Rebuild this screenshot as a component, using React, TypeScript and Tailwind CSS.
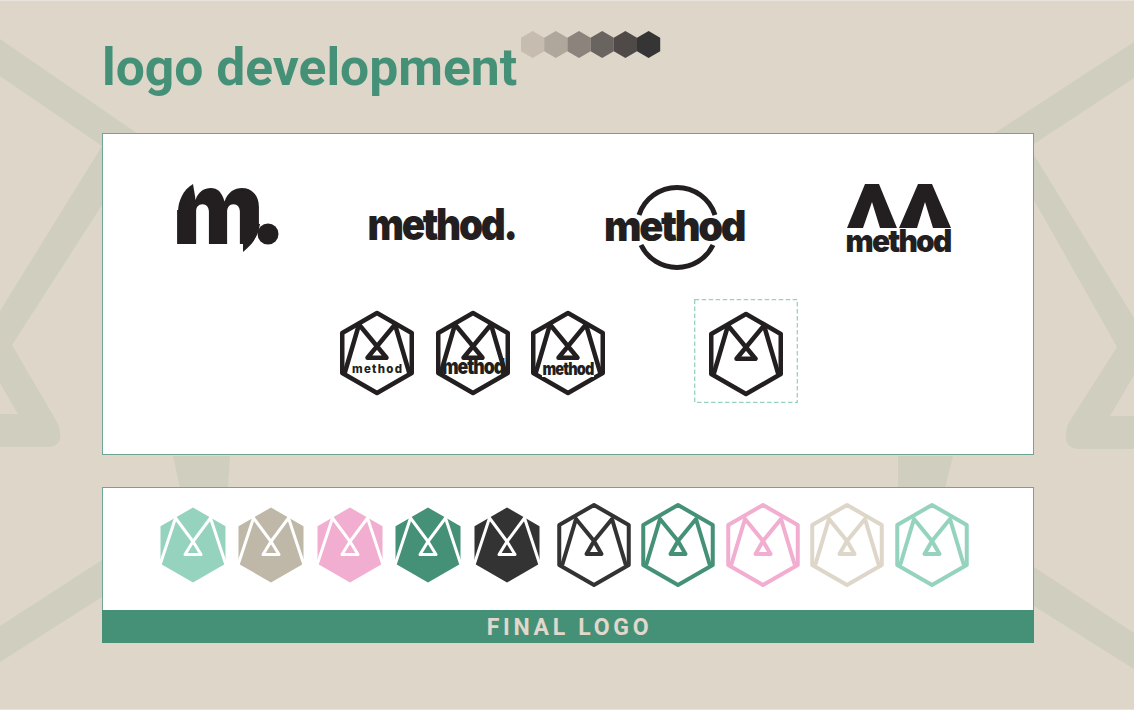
const GREEN = "#459178";
const MINT = "#96d3bf";
const INK = "#231f20";
const WORD_FONT = "Inter, 'Liberation Sans', sans-serif";

const HEX_POINTS = "0,-40 34.75,-20 34.75,20 0,40 -34.75,20 -34.75,-20";
const M_LINES = "M-32,19 L-18,-28.5 L9.5,4.8 L-9.5,4.8 L18,-28.5 L32,19";
const M_FINAL = "M-31.5,19 L-18,-26 L0,-4 L7.5,9 L-7.5,9 L0,-4 L18,-26 L31.5,19";

const Background = () => (
  <svg className="absolute inset-0" width="1134" height="710" viewBox="0 0 1134 710" fill="#d0cebf">
    <polygon points="0,38 138,133 102,145 0,75" />
    <path d="M102,145 L102,204 L12,344 L58,423 Q66,446 47,446 L0,446 L0,413 L18,413 L0,382 L0,310 Z" />
    <polygon points="102,559 102,596 0,661 0,625" />
    <polygon points="173,455 230,455 228,487 180,487" />
    <polygon points="993,133 1134,41 1134,77 1034,143" />
    <path d="M1034,154 L1134,317 L1134,374 L1110,415 L1134,415 L1134,448 L1080,448 Q1060,448 1068,423 L1117,346 L1034,199 Z" />
    <polygon points="1034,566 1134,632 1134,668 1034,605" />
    <polygon points="898,455 953,455 945,487 898,487" />
  </svg>
);

const HexStrip = () => {
  const colors = ["#c6bdb0", "#b0a79c", "#8c837c", "#6a6460", "#4f4a47", "#353535"];
  return (
    <svg width="140" height="27" viewBox="0 0 140 27">
      {colors.map((c, i) => (
        <polygon
          key={c}
          points="0,6.75 11.6,0 23.2,6.75 23.2,20.25 11.6,27 0,20.25"
          fill={c}
          transform={`translate(${i * 23.2} 0)`}
        />
      ))}
    </svg>
  );
};

// wordmark: tight heavy letters squeezed to the measured width
const Word = ({ x, y, width, size, text = "method" }: { x: number; y: number; width: number; size: number; text?: string }) => (
  <text
    x={x}
    y={y}
    textLength={width}
    lengthAdjust="spacingAndGlyphs"
    fontFamily={WORD_FONT}
    fontSize={size}
    fontWeight="900"
    fill={INK}
    letterSpacing={size * -0.06}
  >
    {text}
  </text>
);

const OutlineLogo = ({ word }: { word?: React.ReactNode }) => (
  <svg width="80" height="88" viewBox="-40 -44 80 88" className="shrink-0 overflow-visible">
    <g fill="none" stroke={INK} strokeWidth="4.5" strokeLinejoin="round" strokeLinecap="round">
      <polygon points={HEX_POINTS} />
      <path d={M_LINES} />
    </g>
    {word}
  </svg>
);

const SmallOutline = ({ color }: { color: string }) => (
  <svg width="76" height="86" viewBox="-38 -43 76 86" className="shrink-0">
    <g fill="none" stroke={color} strokeWidth="4" strokeLinejoin="round" strokeLinecap="round">
      <polygon points={HEX_POINTS} />
      <path d={M_FINAL} />
    </g>
  </svg>
);

const FilledLogo = ({ color }: { color: string }) => (
  <svg width="68" height="78" viewBox="-34 -39 68 78" className="shrink-0">
    <polygon points="0,-37.5 32.5,-18.75 32.5,18.75 0,37.5 -32.5,18.75 -32.5,-18.75" fill={color} />
    <path
      d="M-33,20 L-17.5,-27 L0,-3.5 L8,9.5 L-8,9.5 L0,-3.5 L17.5,-27 L33,20"
      fill="none"
      stroke="#fff"
      strokeWidth="3"
      strokeLinejoin="round"
      strokeLinecap="round"
    />
  </svg>
);

const LogoLetter = () => (
  <svg width="104" height="92" viewBox="176 180 104 92" className="shrink-0 overflow-visible">
    <text x="172.3" y="244" fontFamily={WORD_FONT} fontSize="102" fontWeight="900" fill={INK} textLength="91.5" lengthAdjust="spacingAndGlyphs">
      m
    </text>
    <rect x="172" y="184" width="23" height="26" fill="#fff" />
    <path d="M178,212 C178,201 183,190 193,184 L195,196 L195,212 Z" fill={INK} />
    <path d="M262,224 L260,224 C258,236 252,245 243,252 L262,252 Z" fill="#fff" />
    <path d="M243,238 L243,252 C252,245 258,236 260,224 L243,224 Z" fill={INK} />
    <circle cx="268" cy="234" r="10.5" fill={INK} />
  </svg>
);

const LogoWord = () => (
  <svg width="152" height="92" viewBox="366 180 152 92" className="shrink-0 overflow-visible">
    <Word x={367.5} y={240} width={148} size={44} text="method." />
  </svg>
);

const LogoCircle = () => (
  <svg width="142" height="92" viewBox="603 180 142 92" className="-ml-px shrink-0 overflow-visible">
    <path d="M639,215 A40,40 0 0 1 715,215 M641,245 A40,40 0 0 0 713,245" fill="none" stroke={INK} strokeWidth="5" />
    <Word x={604} y={241} width={140} size={42} />
  </svg>
);

const LogoPeaks = () => (
  <svg width="107" height="92" viewBox="845 180 107 92" className="ml-[14px] shrink-0 overflow-visible">
    <polygon points="847,228 865,184 879,184 897,228 880,228 872,202 863,228" fill={INK} />
    <polygon points="899,228 918,184 932,184 951,228 933,228 925,202 917,228" fill={INK} />
    <Word x={845.5} y={252} width={105} size={31} />
  </svg>
);

export default function App() {
  const filled = [MINT, "#bfb8a8", "#f1aed0", GREEN, "#333333"];
  const outlined = ["#333333", GREEN, "#f1aed0", "#ddd6c9", MINT];

  return (
    <div className="relative h-[710px] w-[1134px] overflow-hidden border-y border-[#e8e3da] bg-[#ddd6c9] font-['Roboto',sans-serif]">
      <Background />
      <div className="relative flex flex-col pl-[102px] pr-[100px]">
        <header className="flex h-[132px] items-start">
          <h1 className="mt-[32px] text-[51.6px] leading-[70px] font-bold text-[#459178]">logo development</h1>
          <div className="mt-[30px] ml-[4px]">
            <HexStrip />
          </div>
        </header>

        <section className="h-[322px] border border-[#6fa692] bg-white">
          <div className="flex items-start gap-[86px] pt-[46px] pl-[73px]">
            <LogoLetter />
            <LogoWord />
            <LogoCircle />
            <LogoPeaks />
          </div>
          <div className="mt-[27px] flex items-start pl-[234px]">
            <div className="mt-[10px] flex gap-[15.5px]">
              <OutlineLogo
                word={
                  <text x="-25" y="19.5" textLength="50" fontFamily={WORD_FONT} fontSize="11.5" fontWeight="800" fill={INK}>
                    method
                  </text>
                }
              />
              <OutlineLogo word={<Word x={-31} y={21} width={62} size={21} />} />
              <OutlineLogo
                word={
                  <>
                    <rect x="-26" y="8" width="52" height="16" fill="#fff" />
                    <Word x={-25.5} y={21.5} width={51} size={17} />
                  </>
                }
              />
            </div>
            <div className="relative ml-[86px] flex h-[104px] w-[104px] items-center justify-center pt-[5px]">
              <svg className="absolute inset-0" width="104" height="104" viewBox="0 0 104 104">
                <rect x="0.7" y="0.7" width="102.6" height="102.6" fill="none" stroke={MINT} strokeWidth="1.3" strokeDasharray="4.5 2.5" />
              </svg>
              <OutlineLogo />
            </div>
          </div>
        </section>

        <section className="mt-[32px] border-x border-t border-[#6fa692] bg-white">
          <div className="flex h-[122px] items-center pb-[9px] pl-[55.5px]">
            <div className="flex gap-[10.5px]">
              {filled.map((c) => (
                <FilledLogo key={c} color={c} />
              ))}
            </div>
            <div className="ml-[15px] flex gap-[8.5px]">
              {outlined.map((c) => (
                <SmallOutline key={c} color={c} />
              ))}
            </div>
          </div>
          <div className="-mx-px flex h-[33px] items-center justify-center bg-[#459178] pt-[3px] pl-[3px] text-[23px] font-bold tracking-[3.7px] text-[#e0d8ca]">
            FINAL LOGO
          </div>
        </section>
      </div>
    </div>
  );
}
